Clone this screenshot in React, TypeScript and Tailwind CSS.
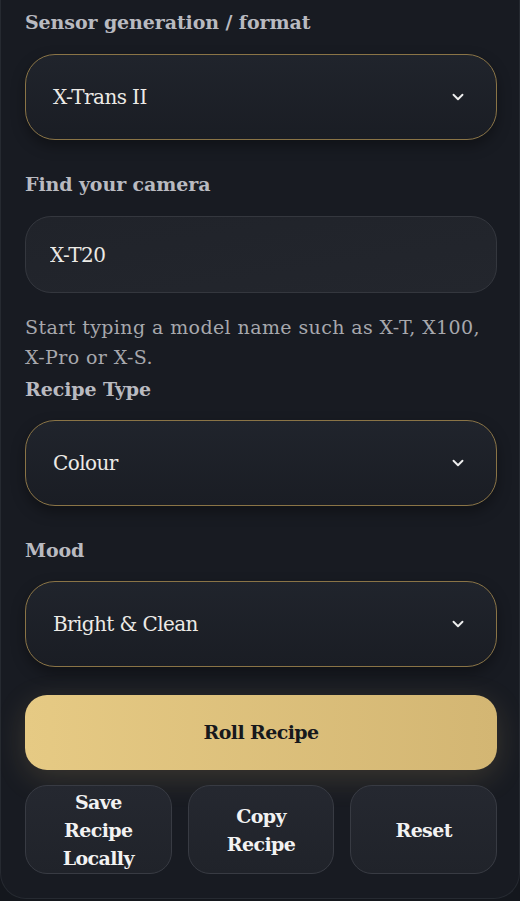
import React, { useState } from 'react';
import { ChevronDown } from 'lucide-react';

const serif = { fontFamily: '"DejaVu Serif", "Liberation Serif", serif' };

function Label({ children }: { children: React.ReactNode }) {
  return <div className="text-[19px] font-bold leading-[24px] text-[#b9bac0] tracking-[-0.1px]">{children}</div>;
}

function SelectBox({ value }: { value: string }) {
  return (
    <div className="flex h-[86px] items-center justify-between rounded-[30px] border border-[#8a7446] bg-gradient-to-b from-[#20242c] to-[#1a1d24] pl-[27px] pr-[29px] shadow-[0_6px_14px_rgba(0,0,0,0.35)]">
      <span className="text-[20px] tracking-[-0.6px] text-[#eceae6]">{value}</span>
      <ChevronDown className="h-[18px] w-[18px] text-[#eeeeee]" strokeWidth={2.5} />
    </div>
  );
}

export default function App() {
  const [camera, setCamera] = useState('X-T20');

  return (
    <div className="min-h-[901px] bg-[#14171d]" style={serif}>
      <div className="rounded-b-[26px] border-x border-b border-[#262a31] bg-[#181b22] pb-[24px] pl-[24px] pr-[22px] pt-[10px]">
        {/* Sensor */}
        <Label>Sensor generation / format</Label>
        <div className="mt-[20px]">
          <SelectBox value="X-Trans II" />
        </div>

        {/* Camera search */}
        <div className="mt-[32px]">
          <Label>Find your camera</Label>
        </div>
        <input
          value={camera}
          onChange={(e) => setCamera(e.target.value)}
          className="mt-[20px] h-[77px] w-full rounded-[26px] border border-[#34373e] bg-gradient-to-br from-[#20232a] to-[#23262d] px-[24px] text-[20px] tracking-[-0.6px] text-[#eceae6] outline-none"
        />
        <p className="mb-[5px] mt-[19px] text-[19px] leading-[30px] tracking-[0.4px] text-[#a7a8ad]">
          Start typing a model name such as X-T, X100, X-Pro or X-S.
        </p>

        {/* Recipe type */}
        <Label>Recipe Type</Label>
        <div className="mt-[19px]">
          <SelectBox value="Colour" />
        </div>

        {/* Mood */}
        <div className="mt-[32px]">
          <Label>Mood</Label>
        </div>
        <div className="mt-[19px]">
          <SelectBox value="Bright & Clean" />
        </div>

        {/* Actions */}
        <button className="mt-[28px] flex h-[75px] w-full items-center justify-center rounded-[22px] bg-gradient-to-r from-[#e6ca84] to-[#d3b673] text-[19px] font-bold tracking-[-0.6px] text-[#17181c] shadow-[0_8px_30px_rgba(214,182,110,0.18)]">
          Roll Recipe
        </button>
        <div className="mt-[15px] grid grid-cols-3 gap-[16px]">
          {['Save Recipe Locally', 'Copy Recipe', 'Reset'].map((t) => (
            <button
              key={t}
              className="flex h-[89px] items-center justify-center rounded-[22px] border border-[#383b43] bg-gradient-to-b from-[#252830] to-[#20232a] px-[12px] text-[19px] font-bold leading-[28px] tracking-[-0.6px] text-[#f2f2f2]"
            >
              {t}
            </button>
          ))}
        </div>
      </div>
    </div>
  );
}
